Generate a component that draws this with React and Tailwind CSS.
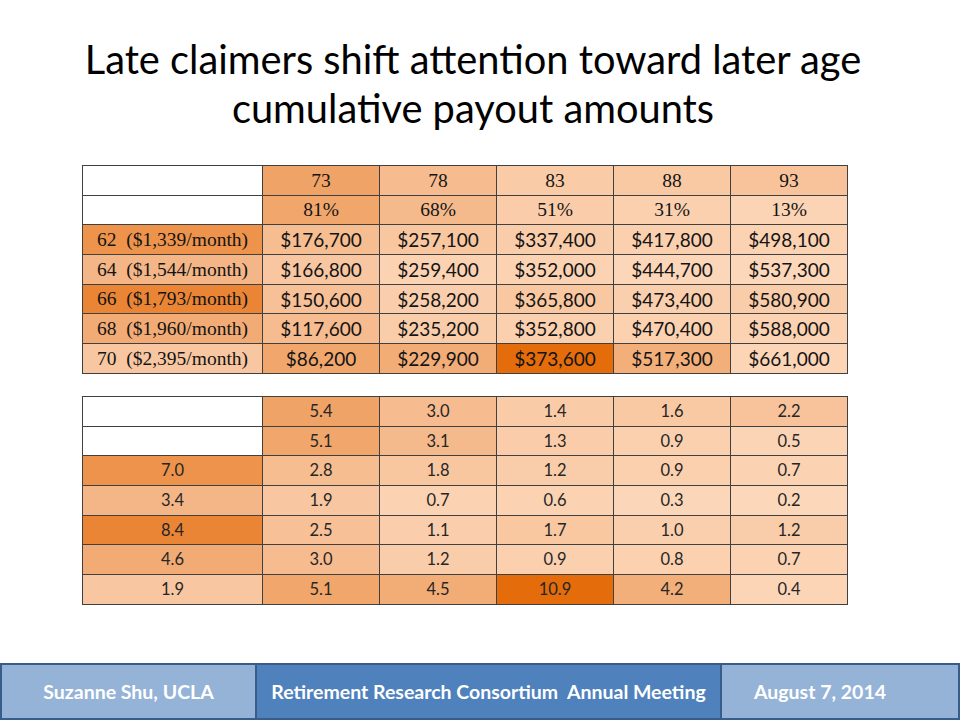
import React from 'react';

/* heat colours (shared by both tables, keyed by the ratio in table 2) */
const H = {
  '0.2': 'bg-[#fcd7ba]', '0.3': 'bg-[#fcd6b8]', '0.4': 'bg-[#fcd5b7]', '0.5': 'bg-[#fbd4b5]',
  '0.6': 'bg-[#fbd3b3]', '0.7': 'bg-[#fbd2b2]', '0.8': 'bg-[#fbd1b0]', '0.9': 'bg-[#fad0af]',
  '1.0': 'bg-[#facfad]', '1.1': 'bg-[#facead]', '1.2': 'bg-[#facdaa]', '1.3': 'bg-[#faccaa]',
  '1.4': 'bg-[#f9cba6]', '1.6': 'bg-[#f9c9a3]', '1.7': 'bg-[#f9c8a1]', '1.8': 'bg-[#f8c7a0]',
  '1.9': 'bg-[#f8c6a0]', '2.2': 'bg-[#f8c39a]', '2.5': 'bg-[#f7c096]', '2.8': 'bg-[#f6bd91]',
  '3.0': 'bg-[#f6bb8e]', '3.1': 'bg-[#f5ba8c]', '3.4': 'bg-[#f5b687]', '4.2': 'bg-[#f3af7a]',
  '4.5': 'bg-[#f2ac76]', '4.6': 'bg-[#f2ab74]', '5.1': 'bg-[#f1a66c]', '5.4': 'bg-[#f0a367]',
  '7.0': 'bg-[#ed934b]', '8.4': 'bg-[#ea8536]', '10.9': 'bg-[#e46c0a]',
};

const ratios = [
  [null, '5.4', '3.0', '1.4', '1.6', '2.2'],
  [null, '5.1', '3.1', '1.3', '0.9', '0.5'],
  ['7.0', '2.8', '1.8', '1.2', '0.9', '0.7'],
  ['3.4', '1.9', '0.7', '0.6', '0.3', '0.2'],
  ['8.4', '2.5', '1.1', '1.7', '1.0', '1.2'],
  ['4.6', '3.0', '1.2', '0.9', '0.8', '0.7'],
  ['1.9', '5.1', '4.5', '10.9', '4.2', '0.4'],
];

const payouts = [
  ['', '73', '78', '83', '88', '93'],
  ['', '81%', '68%', '51%', '31%', '13%'],
  ['62  ($1,339/month)', '$176,700', '$257,100', '$337,400', '$417,800', '$498,100'],
  ['64  ($1,544/month)', '$166,800', '$259,400', '$352,000', '$444,700', '$537,300'],
  ['66  ($1,793/month)', '$150,600', '$258,200', '$365,800', '$473,400', '$580,900'],
  ['68  ($1,960/month)', '$117,600', '$235,200', '$352,800', '$470,400', '$588,000'],
  ['70  ($2,395/month)', '$86,200', '$229,900', '$373,600', '$517,300', '$661,000'],
];

const serif = "font-['Liberation_Serif','Times_New_Roman',serif]";
const sans = "font-['Lato','Open_Sans',sans-serif]";

function cellBg(r, c) {
  const v = ratios[r][c];
  return v ? H[v] : 'bg-white';
}

function Cols() {
  return (
    <colgroup>
      <col className="w-[180px]" />
      <col className="w-[117px]" />
      <col className="w-[117px]" />
      <col className="w-[117px]" />
      <col className="w-[117px]" />
      <col className="w-[117px]" />
    </colgroup>
  );
}

function PayoutTable() {
  return (
    <table className="w-[765px] border-collapse table-fixed">
      <Cols />
      <tbody>
        {payouts.map((row, r) => (
          <tr key={r} className="h-[29.7px]">
            {row.map((txt, c) => {
              const isSerif = r < 2 || c === 0;
              return (
                <td
                  key={c}
                  className={`border border-[#404040] p-0 leading-none text-[#141414] whitespace-pre ${cellBg(r, c)} ${c === 0 ? 'pl-[14px] text-left' : 'text-center'} ${isSerif ? `${serif} text-[19.5px]` : `${sans} text-[19px]`}`}
                >
                  {txt}
                </td>
              );
            })}
          </tr>
        ))}
      </tbody>
    </table>
  );
}

function RatioTable() {
  return (
    <table className="w-[765px] border-collapse table-fixed">
      <Cols />
      <tbody>
        {ratios.map((row, r) => (
          <tr key={r} className="h-[29.7px]">
            {row.map((v, c) => (
              <td
                key={c}
                className={`border border-[#404040] p-0 leading-none text-center text-[16.5px] text-[#262626] ${sans} ${cellBg(r, c)}`}
              >
                {v}
              </td>
            ))}
          </tr>
        ))}
      </tbody>
    </table>
  );
}

export default function App() {
  return (
    <div className="w-[960px] h-[720px] bg-white flex flex-col overflow-hidden">
      {/* title */}
      <div className="h-[165px] pt-[34px] pr-[14px] text-center text-black text-[39.8px] leading-[49px] whitespace-nowrap font-['Lato','Open_Sans',sans-serif]">
        <div>Late claimers shift attention toward later age</div>
        <div>cumulative payout amounts</div>
      </div>

      {/* tables */}
      <div className="pl-[82px] flex flex-col items-start gap-[22px]">
        <PayoutTable />
        <RatioTable />
      </div>

      {/* footer */}
      <div className="mt-auto h-[57px] flex text-white font-bold text-[19.5px] whitespace-nowrap font-['Lato','Open_Sans',sans-serif]">
        <div className="w-[257px] bg-[#95b3d7] border-2 border-[#385d8a] flex items-center justify-center">
          Suzanne Shu, UCLA
        </div>
        <div className="flex-1 bg-[#4f81bd] border-y-2 border-[#385d8a] flex items-center justify-center whitespace-pre">
          Retirement Research Consortium  Annual Meeting
        </div>
        <div className="w-[240px] bg-[#95b3d7] border-2 border-[#385d8a] flex items-center pl-[32px]">
          August 7, 2014
        </div>
      </div>
    </div>
  );
}
